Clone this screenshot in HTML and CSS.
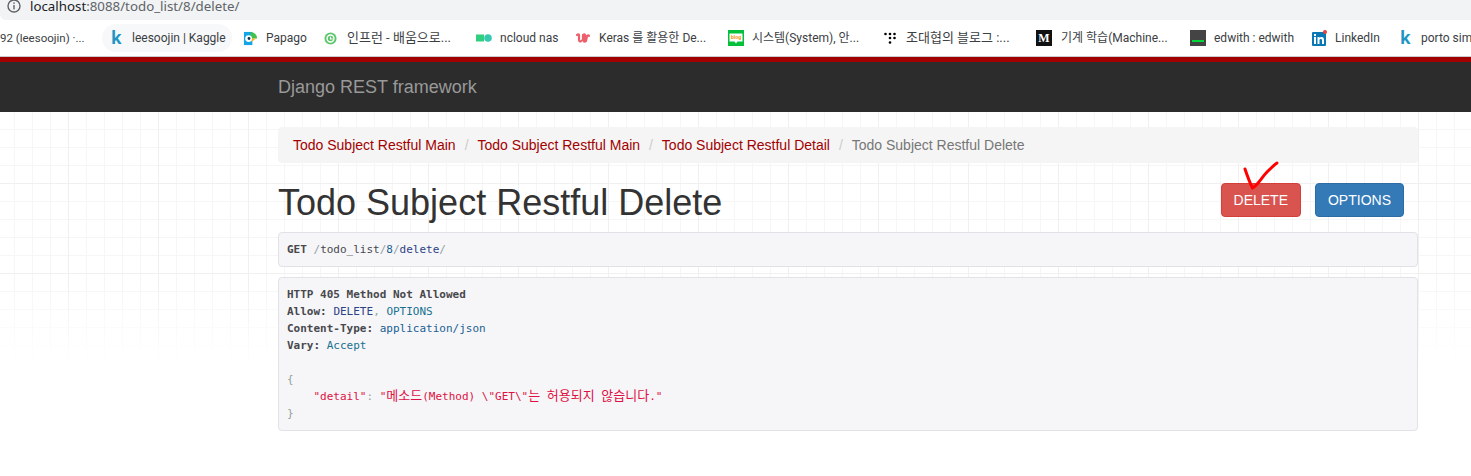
FILE: index.html
```html
<!DOCTYPE html>
<html lang="ko">
<head>
<meta charset="utf-8">
<title>Todo Subject Restful Delete</title>
<link rel="stylesheet" href="styles.css">
</head>
<body>
<div class="address-row">
  <svg class="info-icon" width="14" height="14" viewBox="0 0 14 14"><circle cx="7" cy="7" r="6" fill="none" stroke="#5f6368" stroke-width="1.4"/><rect x="6.3" y="6" width="1.4" height="4.4" fill="#5f6368"/><rect x="6.3" y="3.4" width="1.4" height="1.5" fill="#5f6368"/></svg>
  <span class="address"><span class="host">localhost</span>:8088/todo_list/8/delete/</span>
</div>
<nav class="bookmarks">
  <a class="bm bm-first"><span class="bm-text">92 (leesoojin) ·...</span></a>
  <a class="bm bm-chip"><span class="k-icon">k</span><span class="bm-text">leesoojin | Kaggle</span></a>
  <a class="bm bm-papago">
    <svg width="15" height="15" viewBox="0 0 16 16"><path d="M1 1h9v14H1z" fill="#12a5e8"/><path d="M8 1a7 7 0 0 1 7 7H8z" fill="#3ec24c"/><path d="M8 8h6l-4 3H8z" fill="#f6b21b"/><circle cx="6" cy="8" r="3.6" fill="#fff"/><circle cx="6.4" cy="8" r="1.5" fill="#16324f"/></svg>
    <span class="bm-text">Papago</span></a>
  <a class="bm bm-inflearn">
    <svg width="13" height="13" viewBox="0 0 14 14"><circle cx="7" cy="7" r="6.5" fill="#5cc66b"/><circle cx="7" cy="7" r="3.7" fill="none" stroke="#fff" stroke-width="1.5"/><path d="M7 5v2.6h2.4" fill="none" stroke="#fff" stroke-width="1.2"/></svg>
    <span class="bm-text bm-wide">인프런 - 배움으로...</span></a>
  <a class="bm bm-ncloud">
    <svg width="16" height="16" viewBox="0 0 16 16"><rect x="0" y="4.500" width="8" height="7" fill="#2fcf7f"/><circle cx="12" cy="8" r="3.800" fill="#35c9b0"/></svg>
    <span class="bm-text">ncloud nas</span></a>
  <a class="bm bm-udemy">
    <svg width="16" height="16" viewBox="0 0 16 16"><path d="M2 5c1-1 2-1 2 0v5c0 2 3 2 4-1V5c1-1 2-1 2 0l-1 6c0 1 1 1 2 0l1-5c1-1 2-1 2 0" fill="none" stroke="#ec5f6b" stroke-width="2.200" stroke-linecap="round"/></svg>
    <span class="bm-text">Keras 를 활용한 De...</span></a>
  <a class="bm bm-blog">
    <svg width="16" height="16" viewBox="0 0 16 16"><rect width="16" height="16" fill="#03c03c"/><path d="M1.500 3.500h13v8H9.500L8 13.500 6.500 11.500H1.500z" fill="#fff"/><text class="blog-word" x="8" y="9.300" text-anchor="middle">blog</text></svg>
    <span class="bm-text">시스템(System), 안...</span></a>
  <a class="bm bm-dots">
    <svg width="12" height="12" viewBox="0 0 12 12"><circle cx="1.500" cy="2" r="1.300"/><circle cx="6" cy="2" r="1.300"/><circle cx="10.500" cy="2" r="1.300"/><circle cx="6" cy="6" r="1.300"/><circle cx="10.500" cy="6" r="1.300"/><circle cx="6" cy="10.500" r="1.300"/></svg>
    <span class="bm-text bm-wide">조대협의 블로그 :...</span></a>
  <a class="bm bm-medium"><span class="m-icon">M</span><span class="bm-text">기계 학습(Machine...</span></a>
  <a class="bm bm-edwith">
    <svg width="16" height="16" viewBox="0 0 16 16"><rect width="16" height="16" fill="#444"/><rect x="2" y="10" width="12" height="2" fill="#00d639"/></svg>
    <span class="bm-text">edwith : edwith</span></a>
  <a class="bm bm-linkedin">
    <svg width="16" height="16" viewBox="0 0 16 16"><rect y="2" width="14" height="14" rx="1" fill="#0a78b5"/><rect x="2" y="7" width="2" height="7" fill="#fff"/><rect x="2" y="4" width="2" height="2" fill="#fff"/><path d="M5.500 7h2v1c1-1.500 4.500-1.700 4.500 1.500V14h-2v-4c0-1.500-2.500-1.500-2.500 0v4h-2z" fill="#fff"/><circle cx="13" cy="2" r="2" fill="#e5413c"/></svg>
    <span class="bm-text">LinkedIn</span></a>
  <a class="bm bm-last"><span class="k-icon">k</span><span class="bm-text">porto simple</span></a>
</nav>
<header class="navbar"><span class="brand">Django REST framework</span></header>
<main class="page">
  <div class="container">
    <ul class="breadcrumb">
      <li><a>Todo Subject Restful Main</a></li>
      <li><a>Todo Subject Restful Main</a></li>
      <li><a>Todo Subject Restful Detail</a></li>
      <li class="active">Todo Subject Restful Delete</li>
    </ul>
    <div class="title-row">
      <h1>Todo Subject Restful Delete</h1>
      <div class="actions">
        <button class="btn btn-danger">DELETE</button>
        <button class="btn btn-primary">OPTIONS</button>
        <svg class="check-mark" width="40" height="32" viewBox="0 0 40 32"><path d="M2 9 C4 15 6 21 9.500 28 C15 25 19 17 24 12 C28 8 31 5 34 3" fill="none" stroke="#f00" stroke-width="3" stroke-linecap="round" stroke-linejoin="round"/></svg>
      </div>
    </div>
    <pre class="code request"><b>GET</b> <span class="pun">/</span>todo_list<span class="pun">/</span><span class="lit">8</span><span class="pun">/</span><span class="kwd">delete</span><span class="pun">/</span></pre>
    <pre class="code response"><b>HTTP 405 Method Not Allowed</b>
<b>Allow:</b> <span class="kwd">DELETE</span><span class="pun">,</span> <span class="typ">OPTIONS</span>
<b>Content-Type:</b> <span class="lit">application/json</span>
<b>Vary:</b> <span class="typ">Accept</span>

<span class="pun">{</span>
    <span class="str">"detail"</span><span class="pun">:</span> <span class="str">"<span class="hangul">메소드</span>(Method) \"GET\"<span class="hangul">는</span> <span class="hangul">허용되지</span> <span class="hangul">않습니다</span>."</span>
<span class="pun">}</span></pre>
  </div>
</main>
</body>
</html>
```
FILE: styles.css
```css
* { box-sizing: border-box; }
html, body { margin: 0; padding: 0; background: #fff; overflow: hidden; }
body { font-family: "Liberation Sans", Arial, sans-serif; font-size: 14px; color: #333; }

.address-row {
  height: 20px; background: #f1f3f4; display: flex; align-items: flex-start; overflow: hidden;
  padding-left: 7px; border-bottom-left-radius: 6px;
}
.info-icon { margin-top: -1px; flex: none; }
.address { margin: -4px 0 0 9px; font: 13.300px/20px "Noto Sans", "Open Sans", sans-serif; color: #5f6368; white-space: nowrap; }
.host { color: #202124; }

.bookmarks {
  height: 37px; background: #fff; border-bottom: 1px solid #c9cbce;
  display: flex; align-items: center; overflow: hidden; white-space: nowrap;
  font: 12px/16px Roboto, "Noto Sans CJK KR", sans-serif; color: #3c4043;
}
.bm { display: flex; align-items: center; flex: none; gap: 9px; height: 28px; }
.bm svg { flex: none; }
.bm-first { width: 102px; font-size: 11.500px; }
.bm-chip { width: 130px; padding-left: 9px; background: #f7f8f9; border-radius: 14px; gap: 12px; }
.bm-papago { margin-left: 11px; width: 81px; gap: 8px; }
.bm-inflearn { width: 152px; gap: 10px; }
.bm-ncloud { width: 99px; gap: 8px; }
.bm-udemy { width: 153px; gap: 8px; }
.bm-blog { width: 156px; gap: 8px; }
.bm-dots { width: 152px; gap: 10px; }
.bm-medium { width: 154px; gap: 9px; }
.bm-edwith { width: 122px; gap: 8px; }
.bm-linkedin { width: 88px; gap: 7px; }
.bm-last { gap: 12px; }
.bm-wide { font-size: 13px; }
.k-icon { font: bold 17px/16px "Noto Sans", sans-serif; color: #1f95c4; width: 9px; }
.m-icon {
  width: 16px; height: 16px; background: #111; color: #fff; text-align: center;
  font: bold 12px/16px "Liberation Serif", serif;
}
.blog-word { font: bold 5px "Liberation Sans", sans-serif; fill: #f28b00; }
.bm-text { display: block; }

.navbar {
  height: 55px; background: #2c2c2c; border-top: 5px solid #a30000;
  padding-left: 278px; display: flex; align-items: center;
}
.brand { font-size: 18px; line-height: 50px; color: #999; }

.page { position: relative; height: 364px; }
.page::before {
  content: ""; position: absolute; left: 0; right: 0; top: 0; height: 256px;
  background-image:
    linear-gradient(#f0f0f0 1px, transparent 1px),
    linear-gradient(90deg, #f0f0f0 1px, transparent 1px),
    linear-gradient(#f6f6f6 1px, transparent 1px),
    linear-gradient(90deg, #f6f6f6 1px, transparent 1px);
  background-size: 90px 90px, 90px 90px, 18px 18px, 18px 18px;
  background-position: 0 71px, 68px 0, 0 17px, 14px 0;
  -webkit-mask-image: linear-gradient(#000 68%, transparent);
  mask-image: linear-gradient(#000 68%, transparent);
}
.container { position: relative; margin-left: 278px; width: 1140px; padding-top: 15px; }

.breadcrumb {
  list-style: none; margin: 0; padding: 8px 15px; height: 36px; background: #f5f5f5;
  border-radius: 4px; display: flex; line-height: 20px;
}
.breadcrumb a { color: #a30000; }
.breadcrumb li + li::before { content: "/\00a0"; color: #ccc; padding: 0 5px 0 9px; }
.breadcrumb .active { color: #777; }

.title-row { display: flex; justify-content: space-between; align-items: flex-start; margin-top: 20px; }
h1 { margin: 0; font-size: 36px; font-weight: 500; line-height: 40px; color: #333; }
.actions { position: relative; display: flex; gap: 14px; margin-right: 14px; }
.btn {
  height: 34px; padding: 6px 12px; font: 14px/20px "Liberation Sans", Arial, sans-serif;
  color: #fff; border: 1px solid transparent; border-radius: 4px;
}
.btn-danger { background: #d9534f; border-color: #d43f3a; }
.btn-primary { background: #337ab7; border-color: #2e6da4; }
.check-mark { position: absolute; left: 22px; top: -23px; }

.code {
  margin: 0; padding: 8px; background: #f6f6f9; border: 1px solid #e1e1e8; border-radius: 4px;
  font: 11px/17px "DejaVu Sans Mono", "Noto Sans CJK KR", monospace; color: #48484c; overflow: hidden;
}
.request { margin-top: 9px; height: 35px; }
.response { margin-top: 10px; height: 154px; }
.code b { font-weight: bold; }
.hangul { font-size: 13px; line-height: 1; }
.pun { color: #93a1a1; }
.lit { color: #195f91; }
.kwd { color: #2b4285; }
.typ { color: #17718f; }
.str { color: #dd1144; }
```
